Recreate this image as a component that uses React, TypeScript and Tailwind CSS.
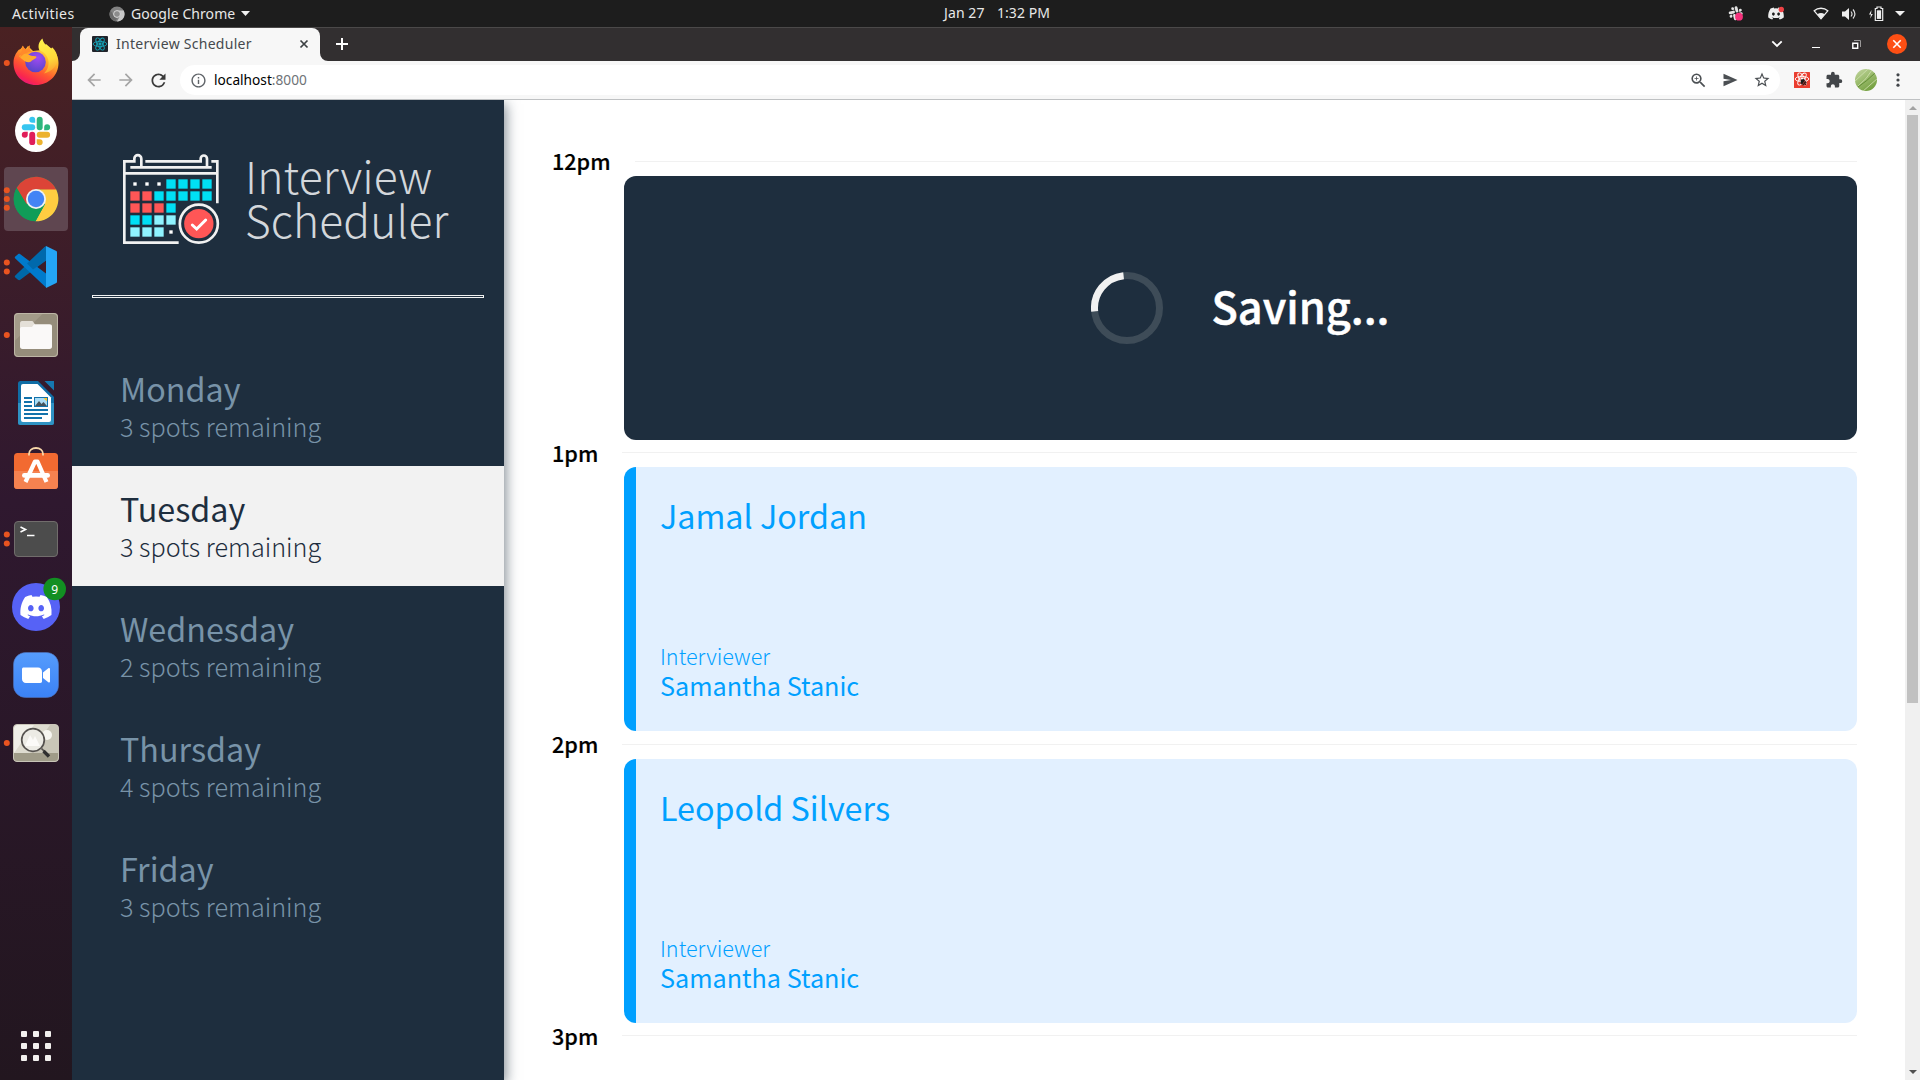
import React from "react";
import { FaDiscord } from "react-icons/fa";
import { MdExtension, MdStarBorder, MdOutlineInfo, MdRefresh, MdArrowBack, MdArrowForward, MdZoomIn } from "react-icons/md";

function SlackMark({ colors }: { colors: [string, string, string, string] }) {
  const [blue, green, yellow, red] = colors;
  return (
    <g>
      <g fill={blue}>
        <path d="M8.834 0a2.528 2.528 0 0 0-2.521 2.522 2.527 2.527 0 0 0 2.521 2.52h2.521v-2.52A2.528 2.528 0 0 0 8.834 0z" />
        <rect x="0" y="6.313" width="11.355" height="5.042" rx="2.521" />
      </g>
      <g fill={green}>
        <path d="M18.956 8.834a2.528 2.528 0 1 1 2.522 2.521h-2.522z" />
        <rect x="12.645" y="0" width="5.042" height="11.355" rx="2.521" />
      </g>
      <g fill={yellow}>
        <path d="M15.165 18.956a2.528 2.528 0 1 1-2.520 2.522v-2.522z" />
        <rect x="12.645" y="12.645" width="11.355" height="5.042" rx="2.521" />
      </g>
      <g fill={red}>
        <path d="M5.042 15.165a2.528 2.528 0 1 1-2.520-2.520h2.520z" />
        <rect x="6.313" y="12.645" width="5.042" height="11.355" rx="2.521" />
      </g>
    </g>
  );
}

function ReactAtom({ color }: { color: string }) {
  return (
    <g fill="none" stroke={color} strokeWidth="0.9">
      <ellipse cx="8" cy="8" rx="6.8" ry="2.6" />
      <ellipse cx="8" cy="8" rx="6.8" ry="2.6" transform="rotate(60 8 8)" />
      <ellipse cx="8" cy="8" rx="6.8" ry="2.6" transform="rotate(120 8 8)" />
      <circle cx="8" cy="8" r="1.2" fill={color} />
    </g>
  );
}

/* ---------- Dock icons, each drawn in a 72 x 68 slot centred on (36, 34) ---------- */

const Firefox = () => (
  <g>
    <defs>
      <linearGradient id="ffBody" x1="0.8" y1="0.05" x2="0.25" y2="1">
        <stop offset="0" stopColor="#fff44f" />
        <stop offset="0.3" stopColor="#ffb02a" />
        <stop offset="0.6" stopColor="#ff5a30" />
        <stop offset="0.85" stopColor="#f9264e" />
        <stop offset="1" stopColor="#e31587" />
      </linearGradient>
      <linearGradient id="ffTail" x1="0.5" y1="0" x2="0.7" y2="1">
        <stop offset="0" stopColor="#fff24a" />
        <stop offset="0.6" stopColor="#ffd83a" />
        <stop offset="1" stopColor="#ff9a2e" />
      </linearGradient>
      <radialGradient id="ffGlobe" cx="0.6" cy="0.3" r="0.8">
        <stop offset="0" stopColor="#a04bf2" />
        <stop offset="1" stopColor="#4f44c4" />
      </radialGradient>
    </defs>
    <path d="M18.5 21C16 24 13.5 28 13.5 34c0 12.500 10 22 22.500 22s22.500-9.500 22.500-22c0-6-2.500-10.500-5.500-13l-7-6-4 6-9 1-5-5-3 4-2-4-2.500 3z" fill="url(#ffBody)" />
    <path d="M42.500 9.500c-4 3-5 8.500-3 12 4 1 8.500 5 9 11 .5 5-1.500 9-4.500 12 8.500-2 13-8 13.500-14 .2-5-2-9-5-12-1 0-1.500 1-1.500 2-3-3-8-6-8.500-11z" fill="url(#ffTail)" />
    <circle cx="35.500" cy="33" r="10.300" fill="url(#ffGlobe)" />
    <path d="M19 27c5-4 9-2 11.500-.5 2 .8 5.500.2 6 1.500-.5 2-4 2.500-5.500 4.500-1.500 1.200-4 1-6.500-.5-2-1.500-4-3-5.500-5z" fill="#ffab2c" />
    <path d="M22.500 16.500c1 1.500 2 3 4.500 4 2-3 0-3 3-4-1 3.500 0 5 2 6.500-4 0-9 1.500-12 6z" fill="#ff8a2a" />
  </g>
);

const Slack = () => (
  <g>
    <circle cx="36" cy="34" r="21" fill="#fff" />
    <g transform="translate(21.8 19.800) scale(1.18)">
      <SlackMark colors={["#36c5f0", "#2eb67d", "#ecb22e", "#e01e5a"]} />
    </g>
  </g>
);

const Chrome = () => (
  <g>
    <rect x="4" y="2" width="64" height="64" rx="4" fill="#5f4650" />
    <circle cx="36" cy="34" r="22.300" fill="#109d58" />
    <path d="M16.700 22.850A22.300 22.300 0 0 1 56.500 25.200L36 24.500l-9.500 14.500z" fill="#dc4437" />
    <path d="M36 24.400H56.200A22.300 22.300 0 0 1 35.500 56.300L45 39z" fill="#ffcd41" />
    <path d="M16.500 23.200L26.500 40 36 44 45 39 35.500 56.300A22.300 22.300 0 0 1 16.500 23.200z" fill="#109d58" />
    <circle cx="36" cy="34" r="10" fill="#f1f1f1" />
    <circle cx="36" cy="34" r="8.200" fill="#4384f5" />
  </g>
);

const VSCode = () => (
  <g>
    <path d="M15.300 42.500c-.8.800-.6 1.500 0 2l2.700 2.300c.8.600 1.600.5 2.300 0L46 27.500V13z" fill="#0068a8" />
    <path d="M15.300 25.500c-.8-.8-.6-1.500 0-2l2.700-2.300c.8-.6 1.600-.5 2.300 0L46 40.500V54.500z" fill="#007acc" />
    <path d="M46 13l10.300 5c.5.300.7.700.7 1.300v29.400c0 .6-.2 1-.7 1.300L46 55z" fill="#24a5f5" />
    <path d="M46 27.500V13.500l-1.500.5L27 30.500l6 6z" fill="#0069ac" />
  </g>
);

const Files = () => (
  <g>
    <rect x="14" y="12" width="44" height="44" rx="4" fill="#a39b89" />
    <path d="M14.500 40L43 12.500H54a3.500 3.500 0 0 1 3.500 3.500V52a3.500 3.500 0 0 1-3.500 3.500H18a3.500 3.500 0 0 1-3.500-3.500z" fill="#958d7b" />
    <rect x="14.500" y="12.500" width="43" height="43" rx="3.500" fill="none" stroke="#bdb6a6" />
    <path d="M20 22.500c0-1.500.7-2.500 2-2.500h9.500c1 0 1.500.5 2 1.200L35 23.500V30H20z" fill="#e4e0d8" />
    <path d="M20 28c0-1.500 1-2 2.200-2H32l2-2.800h15.500c1.800 0 2.500.8 2.500 2.300V45.500c0 1.500-.8 2.500-2.500 2.500h-27C20.800 48 20 47 20 45.500z" fill="#faf9f8" />
  </g>
);

const Writer = () => (
  <g>
    <path d="M20.500 12H38L54 28v25.500a2.500 2.500 0 0 1-2.500 2.500h-31a2.500 2.500 0 0 1-2.500-2.500v-39a2.500 2.500 0 0 1 2.500-2.500z" fill="#106da5" />
    <path d="M18 34h36v19.500a2.500 2.500 0 0 1-2.500 2.500h-31a2.500 2.500 0 0 1-2.500-2.500z" fill="#2f93c4" />
    <path d="M44.500 12H54v9.500z" fill="#1678b0" />
    <path d="M23 15h14.500L51 28.500V51a2 2 0 0 1-2 2H23a2 2 0 0 1-2-2V17a2 2 0 0 1 2-2z" fill="#fff" />
    <path d="M24 29h8M24 33h8M24 37h8M24 41h24M24 45h24M24 49h18" stroke="#1272ab" strokeWidth="2" />
    <rect x="34.500" y="28.500" width="13" height="9" fill="#a9dcf5" stroke="#1272ab" />
    <path d="M35 37l4-5 2.500 3 2-2L47 37z" fill="#45535b" />
    <path d="M43.500 29H47v3.500z" fill="#f7c52d" />
  </g>
);

const Software = () => (
  <g>
    <rect x="14" y="16" width="44" height="36" rx="3.500" fill="#f26a31" />
    <path d="M14 34h44v14.500a3.500 3.500 0 0 1-3.500 3.500h-37a3.500 3.500 0 0 1-3.500-3.500z" fill="#f58250" />
    <path d="M29 18.500v-1.500c0-3.500 3-6 7-6s7 2.500 7 6v1.500" fill="none" stroke="#f7d7a8" strokeWidth="1.800" />
    <path d="M25.500 45L35 24.500h2.500L46.500 45" fill="none" stroke="#fff" strokeWidth="4.200" strokeLinejoin="round" />
    <rect x="22" y="36" width="28" height="4.800" rx="2.400" fill="#fff" />
  </g>
);

const Terminal = () => (
  <g>
    <rect x="14.500" y="16.500" width="43" height="35" rx="3.500" fill="#4c4c4c" stroke="#716d6c" />
    <path d="M20.500 22l5 2.500-5 2.500" fill="none" stroke="#fff" strokeWidth="1.600" />
    <path d="M27 30.500h7.500" stroke="#fff" strokeWidth="1.500" />
  </g>
);

const Discord = () => (
  <g>
    <circle cx="36" cy="34" r="24" fill="#5662f6" />
    <FaDiscord x="19" y="17" size={34} color="#fff" />
    <circle cx="54.700" cy="16" r="11.300" fill="#128f22" />
    <text x="54.700" y="20.500" textAnchor="middle" fontSize="12" fill="#fff" fontFamily="Noto Sans">9</text>
  </g>
);

const Zoom = () => (
  <g>
    <defs>
      <linearGradient id="zm" x1="0" y1="0" x2="0" y2="1">
        <stop offset="0" stopColor="#569cfc" />
        <stop offset="1" stopColor="#3b82f6" />
      </linearGradient>
    </defs>
    <rect x="13.500" y="11.500" width="45" height="45" rx="12" fill="url(#zm)" stroke="#4f74bd" strokeWidth="0.600" />
    <path d="M22 28.200c0-1 .6-1.700 1.700-1.700H38c2.500 0 4 1.700 4 4v9.800c0 1-.6 1.700-1.700 1.700H26c-2.500 0-4-1.700-4-4z" fill="#fff" />
    <path d="M43 31.500l5.300-4.200c.8-.6 1.700-.3 1.700.7v12.500c0 1-.9 1.300-1.700.7L43 37z" fill="#fff" />
  </g>
);

const ImageViewer = () => (
  <g>
    <rect x="13.500" y="15.500" width="45" height="37" rx="3.500" fill="#dedcd0" />
    <path d="M14 44L34 16H17a3 3 0 0 0-3 3z" fill="#f0efe8" />
    <path d="M30 44L50 16h5a3 3 0 0 1 3 3v25z" fill="#c9c6b8" />
    <path d="M13.500 44h45v5a3.500 3.500 0 0 1-3.500 3.500H17a3.500 3.500 0 0 1-3.500-3.500z" fill="#9f9b88" />
    <circle cx="47" cy="26" r="5" fill="#f6f5f0" />
    <rect x="13.500" y="15.500" width="45" height="37" rx="3.500" fill="none" stroke="#c9c5b8" />
    <circle cx="33" cy="31" r="11.300" fill="#ecebe5" stroke="#55524f" strokeWidth="1.700" />
    <path d="M25 37l5-11 3 5 2-4 5 10z" fill="#fbfaf8" />
    <path d="M41.500 39.500l2.500 2.500" stroke="#55524f" strokeWidth="1.700" />
    <path d="M43.500 42l5.500 5.500" stroke="#2f2f2f" strokeWidth="3.400" />
  </g>
);

const dock: { name: string; dots: number; Icon: () => React.ReactElement }[] = [
  { name: "Firefox", dots: 1, Icon: Firefox },
  { name: "Slack", dots: 0, Icon: Slack },
  { name: "Chrome", dots: 3, Icon: Chrome },
  { name: "VSCode", dots: 2, Icon: VSCode },
  { name: "Files", dots: 1, Icon: Files },
  { name: "Writer", dots: 0, Icon: Writer },
  { name: "Software", dots: 0, Icon: Software },
  { name: "Terminal", dots: 2, Icon: Terminal },
  { name: "Discord", dots: 0, Icon: Discord },
  { name: "Zoom", dots: 0, Icon: Zoom },
  { name: "Image viewer", dots: 1, Icon: ImageViewer },
];

const dotOffsets: Record<number, number[]> = { 0: [], 1: [0], 2: [-4.4, 4.4], 3: [-8.7, 0, 8.7] };

function Dock() {
  return (
    <nav className="flex w-[72px] shrink-0 flex-col bg-linear-to-b from-[#4a2122] via-[#2f182f] via-45% to-[#22161f] pt-[2px]">
      {dock.map(({ name, dots, Icon }) => (
        <svg key={name} width="72" height="68" viewBox="0 0 72 68" className="shrink-0" aria-label={name}>
          <Icon />
          {dotOffsets[dots].map((d) => (
            <circle key={d} cx="6.800" cy={34 + d} r="3" fill="#e95420" />
          ))}
        </svg>
      ))}
      <div className="mt-auto mb-[19px] ml-[21px] grid w-[30px] grid-cols-3 gap-[6px]">
        {Array.from({ length: 9 }, (_, i) => (
          <span key={i} className="size-[6px] rounded-[1px] bg-[#f2f0ee]" />
        ))}
      </div>
    </nav>
  );
}

function TopBar() {
  return (
    <header className="grid h-[27px] shrink-0 grid-cols-[1fr_auto_1fr] items-center bg-[#1d1d1d] font-['Noto_Sans',sans-serif] text-[14px] leading-[26px] text-[#e8e8e8]">
      <div className="flex items-center">
        <span className="ml-3 w-[97px] tracking-[0.420px]">Activities</span>
        <svg width="16" height="16" viewBox="0 0 16 16">
          <circle cx="8" cy="8" r="7.600" fill="#828282" />
          <path d="M8 4.500h6.700A7.600 7.600 0 0 1 8 15.600L11 10z" fill="#c9c9c9" />
          <path d="M1.500 4.500L5 10l3 2-1.500 3.500A7.600 7.600 0 0 1 1.500 4.500z" fill="#6a6a6a" />
          <circle cx="8" cy="8" r="3.400" fill="#8c8c8c" stroke="#d8d8d8" strokeWidth="1" />
        </svg>
        <span className="ml-[6px] w-[104px] tracking-[0.070px] whitespace-nowrap">Google Chrome</span>
        <svg width="9" height="5" viewBox="0 0 9 5" className="ml-[6px]"><path d="M0 0h9L4.500 5z" fill="#f0f0f0" /></svg>
      </div>
      <div className="-mt-px ml-[74px] flex w-[106px] gap-[11px] whitespace-pre">
        <span className="w-[42px] tracking-[0.100px]">Jan 27</span>
        <span className="tracking-[0.050px]">1:32 PM</span>
      </div>
      <div className="flex items-center justify-end pr-[15px]">
        <svg width="16" height="16" viewBox="0 0 16 16" className="mr-[24px]">
          <g transform="rotate(-15 8 8) translate(1.200 .5) scale(.56)"><SlackMark colors={["#e4e4e4", "#e4e4e4", "#e4e4e4", "#e4e4e4"]} /></g>
          <circle cx="11" cy="10.700" r="3.900" fill="#f5327c" />
        </svg>
        <svg width="16" height="16" viewBox="0 0 16 16" className="mr-[29px] overflow-visible">
          <FaDiscord x="-0.500" y="-1" size={17} color="#eee" />
          <circle cx="13.300" cy="3.500" r="2.700" fill="#ee4245" />
        </svg>
        <svg width="16" height="14" viewBox="0 0 16 14" className="mr-[12px]">
          <path d="M1.200 3.800C5 .4 11 .4 14.800 3.800L8 11.800z" fill="none" stroke="#eee" strokeWidth="1.300" />
          <path d="M4.300 7.200c2.300-1.600 5.100-1.600 7.400 0L8 12z" fill="#eee" />
        </svg>
        <svg width="16" height="14" viewBox="0 0 16 14" className="mr-[11px]">
          <path d="M1 4.500h3L8 1v12L4 9.500H1z" fill="#eee" />
          <path d="M10 4.500c1.200 1.500 1.200 3.500 0 5M12 2.500c2.300 2.700 2.300 6.300 0 9" fill="none" stroke="#ddd" strokeWidth="1.200" />
        </svg>
        <svg width="16" height="16" viewBox="0 0 16 16" className="mr-[11px]">
          <path d="M3.500 4L1 8.500h2l-.8 4L4.800 8H3z" fill="#eee" />
          <path d="M9 1h4v1.500h1.700v12H7.300v-12H9z" fill="none" stroke="#eee" strokeWidth="1.200" />
          <path d="M8.900 4.300h4.200v8.600H8.900z" fill="#eee" />
        </svg>
        <svg width="10" height="5" viewBox="0 0 10 5"><path d="M0 0h10L5 5z" fill="#f0f0f0" /></svg>
      </div>
    </header>
  );
}

function TabStrip() {
  return (
    <div className="flex h-[34px] shrink-0 items-center border-t border-[#4b4949] bg-[#322f30] pr-[13px] pl-[8px]">
      <div className="relative flex h-[33px] w-[240px] items-center rounded-t-lg bg-[#f7f7f7] pr-[11px] pb-px pl-3">
        <svg width="8" height="8" viewBox="0 0 8 8" className="absolute bottom-0 -left-2"><path d="M8 0v8H0a8 8 0 0 0 8-8z" fill="#f7f7f7" /></svg>
        <svg width="8" height="8" viewBox="0 0 8 8" className="absolute -right-2 bottom-0"><path d="M0 0v8h8a8 8 0 0 1-8-8z" fill="#f7f7f7" /></svg>
        <svg width="16" height="16" viewBox="0 0 16 16">
          <rect width="16" height="16" rx="1" fill="#20232a" />
          <ReactAtom color="#16a3b8" />
        </svg>
        <span className="-mt-px ml-2 flex-1 font-['Noto_Sans',sans-serif] text-[14px] leading-4 tracking-[0.270px] text-[#45494d]">Interview Scheduler</span>
        <svg width="10" height="10" viewBox="0 0 10 10"><path d="M1.500 1.500l7 7M8.500 1.500l-7 7" stroke="#3c4043" strokeWidth="1.700" /></svg>
      </div>
      <svg width="12" height="12" viewBox="0 0 12 12" className="-mt-px ml-4"><path d="M6 0v12M0 6h12" stroke="#fff" strokeWidth="2" /></svg>
      <svg width="12" height="8" viewBox="0 0 12 8" className="mr-[-1px] ml-auto -mt-px"><path d="M1.300 1.300L6 6l4.700-4.700" fill="none" stroke="#fff" strokeWidth="1.800" /></svg>
      <svg width="8" height="8" viewBox="0 0 8 8" className="ml-[30px]"><path d="M0 6.500h8" stroke="#fff" /></svg>
      <svg width="9" height="9" viewBox="0 0 9 9" className="-mt-px ml-[32px]">
        <path d="M.8 3.300h4.900v4.900H.8z" fill="none" stroke="#fff" strokeWidth="1.400" />
        <path d="M2 .5h6.500V7" fill="none" stroke="#9b9999" />
      </svg>
      <svg width="20" height="20" viewBox="0 0 20 20" className="-mt-px ml-[26px]">
        <circle cx="10" cy="10" r="10" fill="#fd4f14" />
        <path d="M6.300 6.300l7.400 7.400M13.700 6.300l-7.400 7.400" stroke="#fff" strokeWidth="1.600" />
      </svg>
    </div>
  );
}

function Toolbar() {
  return (
    <div className="flex h-[39px] shrink-0 items-center border-b border-[#bfc1c3] bg-[#f7f7f7] pr-[13px] pl-[12px]">
      <MdArrowBack size={20} className="text-[#a5a5a5]" />
      <MdArrowForward size={20} className="ml-3 text-[#a5a5a5]" />
      <MdRefresh size={21} className="ml-3 text-[#3a3a3a]" />
      <div className="ml-[11px] flex h-[30px] w-[1600px] items-center rounded-full bg-white pr-[9px] pl-[10px]">
        <MdOutlineInfo size={17} className="text-[#5f6368]" />
        <span className="ml-[7px] flex-1 font-['Noto_Sans',sans-serif] text-[13.700px] leading-5 text-black">
          localhost<span className="text-[#6e7276]">:8000</span>
        </span>
        <MdZoomIn size={19} className="text-[#4b4f53]" />
        <svg width="15" height="14" viewBox="0 0 15 14" className="ml-[15px]">
          <path d="M.5.800L14.500 7 .5 13.200V8.200L8 7 .5 5.800z" fill="#4b4f53" />
        </svg>
        <MdStarBorder size={18} className="ml-[15px] text-[#4b4f53]" />
      </div>
      <svg width="16" height="16" viewBox="0 0 16 16" className="ml-[14px]">
        <rect width="16" height="16" rx="0.500" fill="#ea3d2f" />
        <g transform="translate(0 -1)"><ReactAtom color="#fff" /></g>
        <path d="M7 7.500l3-.5 2.500 3.500L12 13l-3.500.5L6.500 11z" fill="#1c1c1c" />
        <path d="M8 13.500l3-5M10 13.500l2-3" stroke="#ea3d2f" strokeWidth="0.700" />
      </svg>
      <MdExtension size={18} className="ml-[15px] text-[#424549]" />
      <svg width="22" height="22" viewBox="0 0 22 22" className="ml-[12px]">
        <defs>
          <clipPath id="av"><circle cx="11" cy="11" r="11" /></clipPath>
          <linearGradient id="avg" x1="0" y1="0" x2="0.600" y2="1">
            <stop offset="0" stopColor="#c3d6a0" />
            <stop offset="0.500" stopColor="#9dbd70" />
            <stop offset="1" stopColor="#74a040" />
          </linearGradient>
        </defs>
        <g clipPath="url(#av)">
          <rect width="22" height="22" fill="url(#avg)" />
          <path d="M-1 13L14-1M3 17Q12 10 17 1M7 23L23 9" stroke="#d3e2b4" strokeWidth="0.800" fill="none" />
          <path d="M3 18Q12 12 20 4" stroke="#55822b" strokeWidth="0.800" fill="none" />
        </g>
      </svg>
      <svg width="4" height="14" viewBox="0 0 4 14" className="ml-[19px]">
        <circle cx="2" cy="1.800" r="1.600" fill="#424549" />
        <circle cx="2" cy="7" r="1.600" fill="#424549" />
        <circle cx="2" cy="12.200" r="1.600" fill="#424549" />
      </svg>
    </div>
  );
}

const C = "#00dff5";
const R = "#ff5656";
const L = "#8ff3ff";
const calendar: (string | null)[][] = [
  [null, null, null, C, C, C, C],
  [R, R, C, C, C, C, C],
  [R, R, R, C],
  [C, C, L, L],
  [L, L, L, null],
];

function CalendarLogo() {
  return (
    <svg width="97" height="92" viewBox="153 159 291 276">
      <g fill="none" stroke="#f1f1f1" strokeWidth="8">
        <path d="M320 428H157V184H187V176a9 9 0 0 1 21 0V202" />
        <path d="M436 310V184H418" />
        <path d="M220 184H386V176a9 9 0 0 1 19 0V202" />
        <path d="M175 202H419M157 220H436" />
      </g>
      {calendar.map((row, y) =>
        row.map((c, x) =>
          c ? (
            <rect key={`${x}-${y}`} x={175 + x * 36} y={238 + y * 36} width="28" height="28" fill={c} />
          ) : (
            <rect key={`${x}-${y}`} x={184 + x * 36} y={247 + y * 36} width="10" height="10" fill="#fff" />
          )
        )
      )}
      <circle cx="380.500" cy="371" r="57" fill="#1e2e3e" stroke="#f1f1f1" strokeWidth="8" />
      <circle cx="380.500" cy="371" r="44" fill={R} />
      <path d="M361 375l13 12 27-27" fill="none" stroke="#fff" strokeWidth="9" strokeLinecap="round" />
    </svg>
  );
}

const days = [
  { name: "Monday", spots: 3 },
  { name: "Tuesday", spots: 3 },
  { name: "Wednesday", spots: 2 },
  { name: "Thursday", spots: 4 },
  { name: "Friday", spots: 3 },
];

function Sidebar() {
  return (
    <aside className="z-10 flex w-[432px] shrink-0 flex-col bg-[#1e2e3e] shadow-[2px_4px_12px_rgba(30,45,61,0.550)]">
      <div className="flex h-[145px] items-start pt-[53px] pl-[51px]">
        <CalendarLogo />
        <p className="mt-px ml-[25px] text-[44.300px] leading-[43.500px] font-[250] tracking-[0.150px] whitespace-pre-line text-[#d3d7db]">
          {"Interview\nScheduler"}
        </p>
      </div>
      <hr className="mt-[50px] ml-5 h-[3px] w-[392px] border border-[#f1f1f1]" />
      <ul className="mt-12">
        {days.map((d) => {
          const selected = d.name === "Tuesday";
          return (
            <li key={d.name} className={selected ? "h-[120px] bg-[#f2f2f2] pt-6 pl-12 text-[#1e2e3e]" : "h-[120px] pt-6 pl-12 text-[#7893a8]"}>
              <h2 className="text-[32.300px] leading-9">{d.name}</h2>
              <h3 className="text-[25.200px] leading-10 font-light">{d.spots} spots remaining</h3>
            </li>
          );
        })}
      </ul>
    </aside>
  );
}

function TimeHeader({ label, compact }: { label: string; compact?: boolean }) {
  return (
    <header className={compact ? "flex h-[27px] items-start" : "flex h-[28px] items-start"}>
      <h4 className="text-[21.600px] leading-[26px] font-medium text-black [-webkit-text-stroke:0.200px_black]">{label}</h4>
      <hr className={compact ? "mt-3 ml-6 flex-1 border-[#f1f1f1]" : "mt-[13px] ml-6 flex-1 border-[#f1f1f1]"} />
    </header>
  );
}

function Appointment({ student }: { student: string }) {
  return (
    <article className="ml-[72px] flex h-[264px] flex-col justify-between rounded-xl border-l-[12px] border-[#00a0ff] bg-[#e2f0ff] pt-7 pb-[30px] pl-6 text-[#00a0ff]">
      <h2 className="text-[32.300px] leading-10">{student}</h2>
      <div>
        <h4 className="text-[21.600px] leading-[29px] font-light">Interviewer</h4>
        <h3 className="text-[25.200px] leading-[31px]">Samantha Stanic</h3>
      </div>
    </article>
  );
}

function Schedule() {
  return (
    <section className="h-[980px] flex-1 overflow-hidden bg-white px-12 pt-12">
      <TimeHeader label="12pm" />
      <article className="ml-[72px] flex h-[264px] items-center justify-center gap-12 rounded-xl bg-[#1e2e3e]">
        <svg width="72" height="72" viewBox="0 0 72 72">
          <circle cx="36" cy="36" r="32.500" fill="none" stroke="#3e4c58" strokeWidth="7" />
          <path d="M3.500 36A32.500 32.500 0 0 1 36 3.500" fill="none" stroke="#f1f1f1" strokeWidth="7" transform="rotate(-6 36 36)" />
        </svg>
        <h1 className="-mt-[6px] text-[43.300px] leading-[60px] font-medium text-white [-webkit-text-stroke:0.500px_white]">Saving...</h1>
      </article>
      <TimeHeader label="1pm" compact />
      <Appointment student="Jamal Jordan" />
      <TimeHeader label="2pm" />
      <Appointment student="Leopold Silvers" />
      <TimeHeader label="3pm" compact />
    </section>
  );
}

function Scrollbar() {
  return (
    <div className="flex w-[15px] shrink-0 flex-col items-center bg-[#f0f0f0]">
      <svg width="8" height="4" viewBox="0 0 8 4" className="mt-[6px] shrink-0"><path d="M0 4h8L4 0z" fill="#a3a3a3" /></svg>
      <div className="mt-[5px] h-[588px] w-[11px] bg-[#c1c1c1]" />
      <svg width="8" height="4" viewBox="0 0 8 4" className="mt-auto mb-[6px] shrink-0"><path d="M0 0h8L4 4z" fill="#505050" /></svg>
    </div>
  );
}

export default function App() {
  return (
    <div className="flex h-[1080px] w-[1920px] flex-col overflow-hidden">
      <TopBar />
      <div className="flex min-h-0 flex-1">
        <Dock />
        <div className="flex min-w-0 flex-1 flex-col">
          <TabStrip />
          <Toolbar />
          <main className="flex min-h-0 flex-1 overflow-hidden font-['Noto_Sans_CJK_SC',sans-serif]">
            <Sidebar />
            <Schedule />
            <Scrollbar />
          </main>
        </div>
      </div>
    </div>
  );
}
